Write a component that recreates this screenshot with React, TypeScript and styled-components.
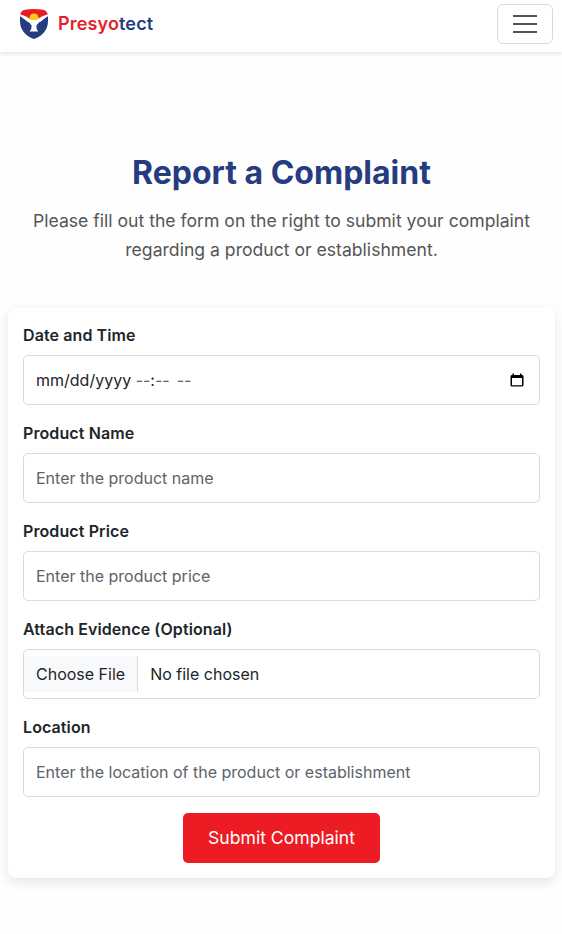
import React from "react";
import styled, { createGlobalStyle } from "styled-components";

const GlobalStyle = createGlobalStyle`
  *, *::before, *::after { box-sizing: border-box; }
  body {
    margin: 0;
    background: #fefefe;
    color: #212529;
    font-family: Inter, sans-serif;
    font-size: 16px;
    line-height: 1.5;
  }
`;

const Navbar = styled.nav`
  display: flex;
  align-items: center;
  justify-content: space-between;
  height: 52px;
  padding: 0 9px 4px 20px;
  background: #fff;
  box-shadow: 0 2px 4px rgba(0, 0, 0, 0.1);
`;

const Brand = styled.a`
  display: flex;
  align-items: center;
  gap: 10px;
  color: #263c80;
  font-size: 18px;
  font-weight: 600;
  line-height: 26px;
  letter-spacing: 0.15px;
  text-decoration: none;
`;

const BrandAccent = styled.span`
  color: #e21f2b;
`;

const Toggler = styled.button`
  display: flex;
  align-items: center;
  justify-content: center;
  width: 56px;
  height: 40px;
  padding: 0;
  border: 1px solid #d9dadb;
  border-radius: 6px;
  background: transparent;
`;

const Main = styled.main`
  min-height: 882px;
  padding: 101px 7px 0 8px;
`;

const Intro = styled.header`
  text-align: center;
`;

const Title = styled.h1`
  margin: 0 0 13px;
  color: #263c80;
  font-size: 32px;
  font-weight: 700;
  line-height: 40px;
`;

const Lead = styled.p`
  margin: 0 auto;
  max-width: 530px;
  color: #555;
  font-size: 17.6px;
  line-height: 29px;
`;

const Card = styled.form`
  display: flex;
  flex-direction: column;
  gap: 16px;
  margin-top: 44px;
  padding: 15px;
  border-radius: 8px;
  background: #fff;
  box-shadow: 0 4px 12px rgba(0, 0, 0, 0.1);
`;

const Field = styled.div`
  display: flex;
  flex-direction: column;
  gap: 8px;
`;

const Label = styled.label`
  font-weight: 600;
  line-height: 24px;
  letter-spacing: 0.1px;
`;

const Input = styled.input`
  width: 100%;
  height: 50px;
  padding: 0 12px;
  border: 1px solid #d9dadb;
  border-radius: 5px;
  background: #fff;
  color: #212529;
  font: inherit;
  &::placeholder { color: #5c636a; opacity: 1; }
`;

const Control = styled.div`
  display: flex;
  align-items: center;
  height: 50px;
  border: 1px solid #d9dadb;
  border-radius: 5px;
  background: #fff;
`;

const DateControl = styled(Control)`
  justify-content: space-between;
  padding: 0 14px 0 12px;
`;

const DateText = styled.span`
  white-space: pre;
`;

const Dashes = styled.span`
  color: #5c636a;
`;

const Meridiem = styled(Dashes)`
  margin-left: 7px;
`;

const FileButton = styled.span`
  padding: 6px 12px;
  border-right: 1px solid #d9dadb;
  background: #f8f9fa;
`;

const FileName = styled.span`
  padding-left: 12px;
`;

const Submit = styled.button`
  align-self: center;
  width: 197px;
  height: 50px;
  padding: 0;
  border: 0;
  border-radius: 5px;
  background: #ed1c24;
  color: #fff;
  font: inherit;
  font-size: 17.6px;
`;

const Shield = () => (
  <svg width="28" height="30" viewBox="0 0 28 30" aria-hidden="true">
    <path d="M0 6Q1 1.500 5 .8Q14-.8 23 .8Q27 1.500 28 6L14 14Z" fill="#e71d25" />
    <path d="M0 7L8 13H20L28 7V12C28 21 22.500 27 14 30C5.500 27 0 21 0 12Z" fill="#263c80" />
    <path d="M.1 5.200Q6 6.600 10.300 10Q14 12 17.500 10Q22 6.600 27.900 5.200V7Q20.500 11 16.400 16.500Q16 19.500 18.200 22.500H9.600Q12 19.500 11.600 16.500Q7.500 11 .1 7Z" fill="#fff" />
    <path d="M9.300 9.200Q9.800 4.500 14 4.400Q18.200 4.500 18.700 9.200Q16.800 11.300 14 11.300Q11.200 11.300 9.300 9.200Z" fill="#fdc913" />
  </svg>
);

const MenuIcon = () => (
  <svg width="24" height="20" viewBox="0 0 24 20" aria-hidden="true">
    <path d="M0 2H24M0 10H24M0 18H24" fill="none" stroke="#555" strokeWidth="2" />
  </svg>
);

const CalendarIcon = () => (
  <svg width="16" height="16" viewBox="0 0 16 16" aria-hidden="true">
    <path
      d="M3.500 1.500H5V3H11V1.500H12.500V3H13Q14.500 3 14.500 4.300V13Q14.500 14.500 13 14.500H3Q1.500 14.500 1.500 13V4.300Q1.500 3 3 3H3.500ZM3 6V13.200H13V6Z"
      fill="#000"
      fillRule="evenodd"
    />
  </svg>
);

type TextFieldProps = { id: string; label: string; placeholder: string };

const TextField = ({ id, label, placeholder }: TextFieldProps) => (
  <Field>
    <Label htmlFor={id}>{label}</Label>
    <Input id={id} placeholder={placeholder} />
  </Field>
);

export default function App() {
  return (
    <>
      <GlobalStyle />
      <Navbar>
        <Brand>
          <Shield />
          <span><BrandAccent>Presyo</BrandAccent>tect</span>
        </Brand>
        <Toggler type="button" aria-label="Toggle navigation"><MenuIcon /></Toggler>
      </Navbar>
      <Main>
        <Intro>
          <Title>Report a Complaint</Title>
          <Lead>Please fill out the form on the right to submit your complaint regarding a product or establishment.</Lead>
        </Intro>
        <Card>
          <Field>
            <Label>Date and Time</Label>
            <DateControl>
              <DateText>mm/dd/yyyy <Dashes>--</Dashes>:<Dashes>--</Dashes><Meridiem>--</Meridiem></DateText>
              <CalendarIcon />
            </DateControl>
          </Field>
          <TextField id="name" label="Product Name" placeholder="Enter the product name" />
          <TextField id="price" label="Product Price" placeholder="Enter the product price" />
          <Field>
            <Label>Attach Evidence (Optional)</Label>
            <Control>
              <FileButton>Choose File</FileButton>
              <FileName>No file chosen</FileName>
            </Control>
          </Field>
          <TextField id="location" label="Location" placeholder="Enter the location of the product or establishment" />
          <Submit type="button">Submit Complaint</Submit>
        </Card>
      </Main>
    </>
  );
}
